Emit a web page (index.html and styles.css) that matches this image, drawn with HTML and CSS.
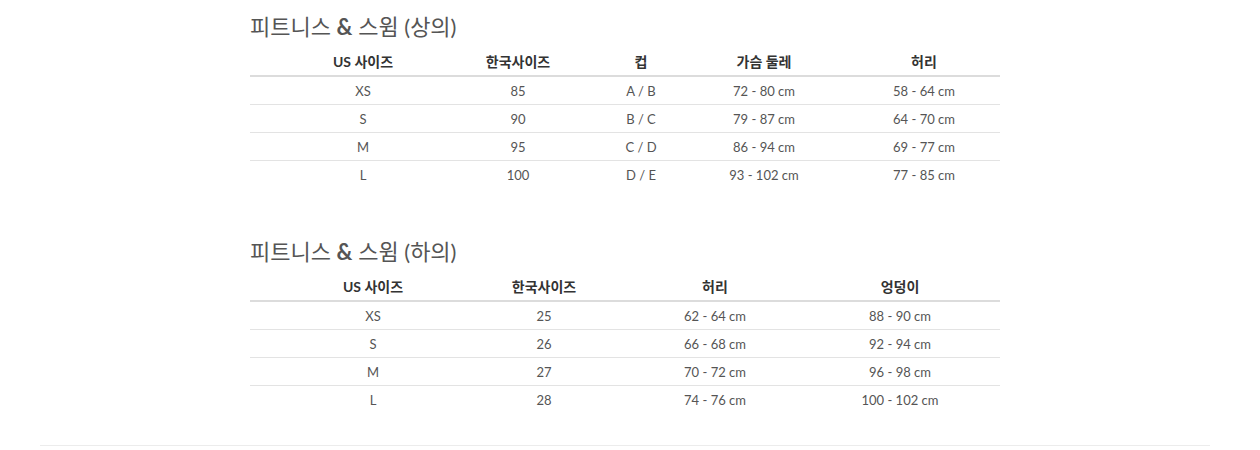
FILE: index.html
```html
<!DOCTYPE html>
<html lang="ko">
<head>
<meta charset="utf-8">
<title>사이즈 가이드</title>
<link rel="stylesheet" href="styles.css">
</head>
<body>
<div class="page">
  <section class="section">
    <h2 class="title">피트니스 <span class="amp">&amp;</span> 스윔 (상의)</h2>
    <table class="size-table">
      <thead>
        <tr>
          <th class="t1c1">US 사이즈</th>
          <th class="t1c2">한국사이즈</th>
          <th class="t1c3">컵</th>
          <th class="t1c4">가슴 둘레</th>
          <th class="t1c5">허리</th>
        </tr>
      </thead>
      <tbody>
        <tr><td>XS</td><td>85</td><td>A / B</td><td>72 - 80 cm</td><td>58 - 64 cm</td></tr>
        <tr><td>S</td><td>90</td><td>B / C</td><td>79 - 87 cm</td><td>64 - 70 cm</td></tr>
        <tr><td>M</td><td>95</td><td>C / D</td><td>86 - 94 cm</td><td>69 - 77 cm</td></tr>
        <tr><td>L</td><td>100</td><td>D / E</td><td>93 - 102 cm</td><td>77 - 85 cm</td></tr>
      </tbody>
    </table>
  </section>
  <section class="section">
    <h2 class="title">피트니스 <span class="amp">&amp;</span> 스윔 (하의)</h2>
    <table class="size-table bottoms">
      <thead>
        <tr>
          <th class="t2c1">US 사이즈</th>
          <th class="t2c2">한국사이즈</th>
          <th class="t2c3">허리</th>
          <th class="t2c4">엉덩이</th>
        </tr>
      </thead>
      <tbody>
        <tr><td>XS</td><td>25</td><td>62 - 64 cm</td><td>88 - 90 cm</td></tr>
        <tr><td>S</td><td>26</td><td>66 - 68 cm</td><td>92 - 94 cm</td></tr>
        <tr><td>M</td><td>27</td><td>70 - 72 cm</td><td>96 - 98 cm</td></tr>
        <tr><td>L</td><td>28</td><td>74 - 76 cm</td><td>100 - 102 cm</td></tr>
      </tbody>
    </table>
  </section>
  <div class="footer-rule"></div>
</div>
</body>
</html>
```

FILE: styles.css
```css
html, body {
  margin: 0;
  padding: 0;
  background: #fff;
}

body {
  font-family: Lato, "Noto Sans CJK KR", sans-serif;
  color: #555;
}

.page {
  padding-top: 13px;
}

.section {
  width: 750px;
  margin-left: 250px;
}

.section + .section {
  margin-top: 49px;
}

.title {
  margin: 0 0 6px;
  font-size: 22px;
  line-height: 28px;
  font-weight: 400;
  color: #555;
}

.amp {
  font-weight: 700;
}

.size-table {
  width: 750px;
  table-layout: fixed;
  border-collapse: separate;
  border-spacing: 0;
}

.size-table th,
.size-table td {
  box-sizing: border-box;
  padding: 0 0 0 42px;
  text-align: center;
  white-space: nowrap;
}

.size-table th {
  font-size: 14px;
  font-weight: 700;
  color: #333;
  line-height: 27px;
  padding-top: 1px;
  border-bottom: 2px solid #dcdcdc;
}

.size-table td {
  font-size: 13px;
  line-height: 26px;
  padding-top: 1px;
  color: #555;
  border-bottom: 1px solid #e3e3e3;
}

.size-table tbody tr:last-child td {
  border-bottom: 0;
  line-height: 27px;
}

.t1c1 { width: 184px; }
.t1c2 { width: 126px; }
.t1c3 { width: 120px; }
.t1c4 { width: 126px; }
.t1c5 { width: 194px; }

.t2c1 { width: 204px; }
.t2c2 { width: 138px; }
.t2c3 { width: 204px; }
.t2c4 { width: 204px; }

.bottoms th:last-child,
.bottoms td:last-child {
  padding-left: 4px;
}

.footer-rule {
  width: 1170px;
  height: 1px;
  margin: 31px 0 0 40px;
  background: #ececec;
}
```
